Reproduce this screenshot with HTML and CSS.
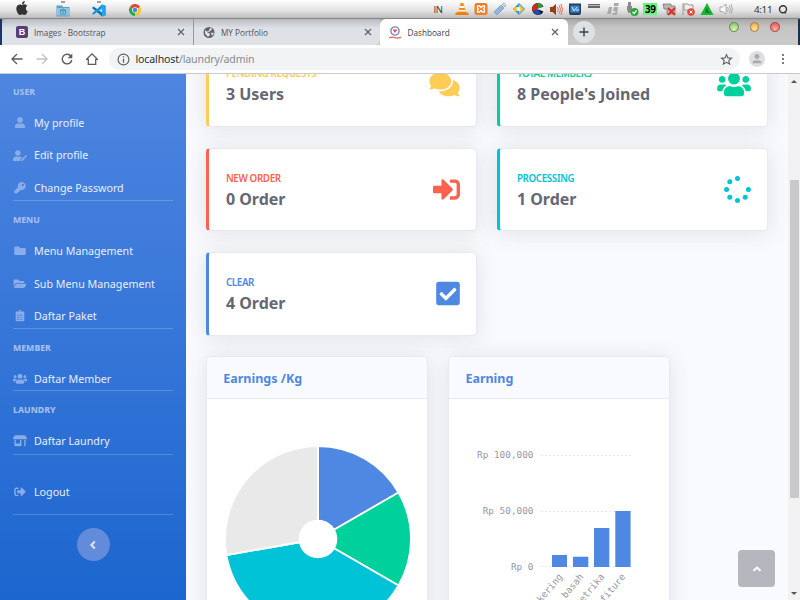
FILE: index.html
```html
<!DOCTYPE html>
<html lang="en">
<head>
<meta charset="utf-8">
<title>Dashboard</title>
<link rel="stylesheet" href="styles.css">
</head>
<body>
<svg class="defs" width="0" height="0">
  <defs>
    <symbol id="user" viewBox="0 0 448 512"><path d="M224 256c70.7 0 128-57.3 128-128S294.700 0 224 0 96 57.300 96 128s57.300 128 128 128zm89.600 32h-16.700c-22.200 10.200-46.900 16-72.900 16s-50.600-5.800-72.900-16h-16.700C60.200 288 0 348.200 0 422.400V464c0 26.500 21.500 48 48 48h352c26.500 0 48-21.500 48-48v-41.600c0-74.200-60.200-134.400-134.400-134.400z"/></symbol>
    <symbol id="user-edit" viewBox="0 0 640 512"><path d="M224 256c70.700 0 128-57.300 128-128S294.700 0 224 0 96 57.300 96 128s57.300 128 128 128zm89.600 32h-16.700c-22.200 10.200-46.900 16-72.900 16s-50.600-5.800-72.900-16h-16.700C60.200 288 0 348.200 0 422.400V464c0 26.500 21.500 48 48 48h274l8-84 92-100c-24-25-62-40-108.400-40zM362 440l-9 70 70-9 150-150-61-61zM592 332l35-35c14-14 14-28 0-42l-20-20c-14-14-28-14-42 0l-35 35z"/></symbol>
    <symbol id="key" viewBox="0 0 512 512"><path d="M512 176C512 273.200 433.200 352 336 352c-11.200 0-22.200-1-32.800-3l-24 27A24 24 0 0 1 261.200 384H224v40c0 13.300-10.700 24-24 24h-40v40c0 13.300-10.700 24-24 24H24c-13.300 0-24-10.700-24-24v-78c0-6.400 2.500-12.500 7-17l161.800-161.800C163.100 213.800 160 195.300 160 176 160 78.800 238.800 0 336 0 433.500 0 512 78.500 512 176zM336 128c0 26.500 21.500 48 48 48s48-21.500 48-48-21.500-48-48-48-48 21.500-48 48z"/></symbol>
    <symbol id="folder" viewBox="0 0 512 512"><path d="M464 128H272l-64-64H48C21.500 64 0 85.500 0 112v288c0 26.500 21.500 48 48 48h416c26.500 0 48-21.500 48-48V176c0-26.500-21.500-48-48-48z"/></symbol>
    <symbol id="folder-open" viewBox="0 0 576 512"><path d="M572.700 292.100L500.300 416.200A64 64 0 0 1 445 448H45c-18.500 0-30-20-20.700-36l72.400-124.200A64 64 0 0 1 152 256h400c18.500 0 30 20 20.700 36.100zM152 224h328v-48c0-26.500-21.500-48-48-48H272l-64-64H48C21.500 64 0 85.500 0 112v278l69-118.400C86.200 242.300 118 224 152 224z"/></symbol>
    <symbol id="clipboard" viewBox="0 0 384 512"><path fill-rule="evenodd" d="M336 64h-80a64 64 0 0 0-128 0H48C21.500 64 0 85.500 0 112v352c0 26.500 21.500 48 48 48h288c26.500 0 48-21.500 48-48V112c0-26.500-21.500-48-48-48zM72 208h48v48H72zm0 96h48v48H72zm0 96h48v40H72zm88-184h144v26H160zm0 96h144v26H160zm0 96h144v26H160zM192 40a24 24 0 1 1 0 48 24 24 0 0 1 0-48z"/></symbol>
    <symbol id="users" viewBox="0 0 640 512"><path d="M96 224c35.300 0 64-28.700 64-64s-28.700-64-64-64-64 28.700-64 64 28.700 64 64 64zm448 0c35.300 0 64-28.700 64-64s-28.700-64-64-64-64 28.700-64 64 28.700 64 64 64zm32 32h-64c-17.600 0-33.500 7.100-45.100 18.600 40.300 22.100 68.900 62 75.100 109.400h66c17.700 0 32-14.300 32-32v-32c0-35.300-28.700-64-64-64zm-256 0c61.900 0 112-50.100 112-112S381.900 32 320 32 208 82.100 208 144s50.100 112 112 112zm76.800 32h-8.300c-20.800 10-43.900 16-68.500 16s-47.600-6-68.500-16h-8.300C179.600 288 128 339.600 128 403.200V432c0 26.500 21.500 48 48 48h288c26.500 0 48-21.500 48-48v-28.800c0-63.600-51.600-115.200-115.200-115.200zm-223.700-13.400C161.500 263.100 145.600 256 128 256H64c-35.300 0-64 28.700-64 64v32c0 17.700 14.300 32 32 32h65.900c6.300-47.400 34.900-87.300 75.200-109.400z"/></symbol>
    <symbol id="store" viewBox="0 0 640 512"><path fill-rule="evenodd" d="M106 0h428c12 0 21 5 27 14l72 113c19 31 1 65-33 65H40c-34 0-52-34-33-65L79 14C85 5 94 0 106 0zM64 224h64v160h192V224h64v240c0 26-22 48-48 48H112c-26 0-48-22-48-48zM512 224h64v264c0 13-11 24-24 24h-16c-13 0-24-11-24-24z"/></symbol>
    <symbol id="sign-out" viewBox="0 0 512 512"><path d="M497 273L329 441c-15 15-41 4.500-41-17v-96H152c-13.300 0-24-10.700-24-24v-96c0-13.300 10.700-24 24-24h136V88c0-21.400 25.900-32 41-17l168 168c9.300 9.400 9.300 24.600 0 34zM192 436v-40c0-6.600-5.400-12-12-12H96c-17.700 0-32-14.300-32-32V160c0-17.700 14.300-32 32-32h84c6.600 0 12-5.400 12-12V76c0-6.600-5.400-12-12-12H96c-53 0-96 43-96 96v192c0 53 43 96 96 96h84c6.600 0 12-5.400 12-12z"/></symbol>
    <symbol id="close" viewBox="0 0 8 8"><path d="M1 1l6 6M7 1L1 7" fill="none" stroke="#5f6368" stroke-width="1.200"/></symbol>
  </defs>
</svg>

<div class="screen">
  <header class="menubar">
    <div class="dock">
      <svg class="apple" viewBox="0 0 24 24"><path d="M12.150 6.900c-.950 0-2.410-1.080-3.960-1.040-2.040.030-3.910 1.180-4.960 3.010-2.120 3.680-.550 9.100 1.520 12.090 1.010 1.450 2.210 3.090 3.790 3.040 1.520-.070 2.090-.990 3.940-.990 1.830 0 2.350.990 3.960.950 1.640-.030 2.680-1.480 3.680-2.950 1.160-1.690 1.640-3.330 1.660-3.420-.040-.010-3.180-1.220-3.220-4.860-.030-3.040 2.480-4.490 2.600-4.560-1.430-2.090-3.620-2.320-4.390-2.380-2-.160-3.680 1.090-4.610 1.090zM15.530 3.830c.840-1.010 1.400-2.430 1.250-3.830-1.210.050-2.660.810-3.530 1.820-.780.900-1.450 2.340-1.270 3.710 1.340.100 2.720-.690 3.560-1.700"/></svg>
      <svg class="finder" viewBox="0 0 14 15"><path d="M5 0h4v1H5z" fill="#444"/><path d="M1 4h5l1 1.500h6.500V15H.500V4z" fill="#5e9fc4"/><path d="M1 6.500h12V14H1z" fill="#8cc3df"/><path d="M4 9l3-1.500L10 9zM4.500 9.500v2.500M7 9.500v2.500M9.500 9.500v2.500M4 12.500h6" fill="none" stroke="#4d88ab" stroke-width=".8"/></svg>
      <svg class="code" viewBox="0 0 14 15"><path d="M5 0h4v1H5z" fill="#444"/><path d="M10 3l3.500 1.300v9.400L10 15 0 6.500 1.500 5l8.500 6z" fill="#0078bd"/><path d="M10 3v12l3.500-1.300V4.300z" fill="#21a5f0"/><path d="M10 3v4L1.500 13.300 0 12z" fill="#1493dc"/></svg>
      <svg class="chrome" viewBox="0 0 12 12"><path d="M6 6L.8 3A6 6 0 0 1 11.200 3z" fill="#e4463a"/><path d="M6 6l5.200-3A6 6 0 0 1 6 12z" fill="#fbc52e"/><path d="M6 6v6A6 6 0 0 1 .8 3z" fill="#2da653"/><circle cx="6" cy="6" r="2.800" fill="#fff"/><circle cx="6" cy="6" r="2.200" fill="#4486ef"/></svg>
    </div>
    <span class="lang">IN</span>
    <div class="tray">
      <svg viewBox="0 0 14 14"><path d="M5.700 1h2.600L11 11H3z" fill="#f58a12"/><path d="M5 4h4l.6 2H4.400zM4 8h6l.4 1.500H3.600z" fill="#fff"/><path d="M1 10.500h12l.8 2.500H.2z" fill="#ee7d0b"/></svg>
      <svg viewBox="0 0 14 14"><rect x=".5" y="1" width="13" height="12" rx="2.500" fill="#f47b20"/><path d="M3.500 4h2L7 5.500 8.500 4h2v2l-1 1 1 1v2h-2L7 8.500 5.500 10h-2V8l1-1-1-1z" stroke="#fff" stroke-width="1.300" fill="none"/></svg>
      <svg viewBox="0 0 14 14"><path d="M1 10l7-7 3 3-7 7z" fill="#8fb6e2" stroke="#6b8bb0" stroke-width=".6"/><path d="M9 2l2-1 2 2-1 2z" fill="#ddd" stroke="#888" stroke-width=".5"/></svg>
      <svg viewBox="0 0 14 14"><path d="M1 7l6-6 6 6-6 6z" fill="#2f9ae0"/><path d="M2 5h5V2l5 5-5 5V9H2z" fill="#f5bf32"/><circle cx="6.500" cy="7" r="2" fill="#e8f1fa"/></svg>
      <svg viewBox="0 0 14 14"><circle cx="7" cy="7" r="6" fill="#101c20"/><path d="M7 1a6 6 0 0 0-5 9l5-3z" fill="#c72b23"/><path d="M7 1a6 6 0 0 1 5 3L7 7z" fill="#2b9c37"/><path d="M2 10a6 6 0 0 0 8 2L7 7z" fill="#1d4cb5"/><path d="M14 4L6 7l8 3z" fill="#ececec"/></svg>
      <svg viewBox="0 0 14 14"><path d="M1 5h2.500L7 2v11L3.500 10H1z" fill="#94400f"/><path d="M8.500 5q1.500 2.500 0 5M10.300 3.500q2.500 4 0 8M12 2q3 5.500 0 11" fill="none" stroke="#ed6a4b"/></svg>
      <svg viewBox="0 0 14 14"><path d="M1 1.500h12v9.500l-1 2H2l-1-2z" fill="#24405d"/><path d="M2.500 3.500h9v7h-9z" fill="#3a85cf"/><path d="M4 5l2 4 3-4M8 8h3" stroke="#d9ecfa" fill="none"/></svg>
      <svg viewBox="0 0 14 14"><path d="M1 2h12v4H1z" fill="#666"/><path d="M1 3h12v1H1z" fill="#bbb"/></svg>
      <svg viewBox="0 0 14 14"><path d="M8 1h5l-1 3H8zM3 5h3l-1 7H1zM8 5h4l-1 8H6l1-2h2l.5-2H7z" fill="#aaa"/></svg>
      <svg viewBox="0 0 14 14"><path d="M3 0h3v4H3zM2 4h5v4l-1.500 3h-2L2 8z" fill="#898989"/><circle cx="9.500" cy="10" r="4" fill="#25a938"/><path d="M7.500 10l1.500 1.500 2.500-3" stroke="#fff" fill="none" stroke-width="1.200"/></svg>
      <span class="badge">39</span>
      <svg viewBox="0 0 14 14"><path d="M1 2h8v2h4v8H5V7H2z" fill="#b6b6b6" stroke="#707070" stroke-width=".7"/><path d="M6 6l7 7M13 6l-7 7" stroke="#e32d21" stroke-width="2"/></svg>
      <svg viewBox="0 0 14 14"><path d="M2 1v12M3 2h4l1 1h4v6H8L7 8H3z" fill="#eee" stroke="#888" stroke-width=".8"/><circle cx="10" cy="10" r="3.800" fill="#e2463b"/><path d="M8.500 8.500l3 3M11.500 8.500l-3 3" stroke="#fff"/></svg>
      <svg viewBox="0 0 14 14"><path d="M7 1l6.500 12H.5z" fill="#16b835"/><path d="M7 5l1 4 3 2-6-.5z" fill="#0a7c1d"/></svg>
      <svg viewBox="0 0 14 14"><path d="M1 5h2.500L7 2v10L3.500 9.500H1z" fill="#fafafa" stroke="#999" stroke-width=".8"/><path d="M8.500 5q1.500 2 0 4.500M10.300 3.500q2.500 4 0 7.500M12 2q3 5 0 10" fill="none" stroke="#999" stroke-width=".8"/></svg>
    </div>
    <span class="clock">4:11</span>
    <svg class="spot" viewBox="0 0 10 10"><circle cx="5" cy="4.700" r="3.500" fill="none" stroke="#333" stroke-width="1.400"/><path d="M6.800 7l1 2" stroke="#333" stroke-width="1.300"/></svg>
  </header>

  <div class="tabs">
    <div class="tab first">
      <span class="bs">B</span><span class="name">Images · Bootstrap</span><svg class="x"><use href="#close"/></svg>
    </div>
    <div class="tab second">
      <svg class="fav" viewBox="0 0 12 12"><circle cx="6" cy="6" r="5.500" fill="#5f6368"/><path d="M2 3.500q2 2.500 4 .500l1-2.500 2 .500q0 2-2.500 3L4 6l3 1q0 2-2 3.500L2 7z" fill="#dee1e6"/><path d="M8 6l3 .500-2 3z" fill="#dee1e6"/></svg>
      <span class="name">MY Portfolio</span><svg class="x"><use href="#close"/></svg>
    </div>
    <div class="tab active">
      <svg class="fav" viewBox="0 0 12 13"><circle cx="6" cy="5" r="4.100" fill="#fff" stroke="#7a83c9" stroke-width="1.400"/><path d="M3.500 3.500h5L6 7z" fill="#e2504a"/><path d="M0 11.700q3-1 6 0t6-.500" fill="none" stroke="#ec6d6d" stroke-width="1.400"/></svg>
      <span class="name">Dashboard</span><svg class="x"><use href="#close"/></svg>
    </div>
    <div class="plus"><svg viewBox="0 0 10 10"><path d="M5 .5v9M.5 5h9" stroke="#3c4043" stroke-width="1.400"/></svg></div>
    <div class="lights"><i class="green"></i><i class="amber"></i><i class="red"></i></div>
  </div>

  <div class="toolbar">
    <svg viewBox="0 0 12 12"><path d="M11.500 6H1.500M6 1L1 6l5 5" fill="none" stroke="#5a5e62" stroke-width="1.300"/></svg>
    <svg viewBox="0 0 12 12"><path d="M.5 6h10M6 1l5 5-5 5" fill="none" stroke="#bfc1c4" stroke-width="1.300"/></svg>
    <svg viewBox="0 0 12 12"><path d="M10 3.200A4.800 4.800 0 1 0 10.800 7" fill="none" stroke="#5a5e62" stroke-width="1.400"/><path d="M11.300.5v4.700H6.600z" fill="#5a5e62"/></svg>
    <svg viewBox="0 0 12 12"><path d="M.6 6.300L6 .9l5.400 5.400H9.700v5H2.300v-5z" fill="none" stroke="#5a5e62" stroke-width="1.300"/></svg>
    <div class="address">
      <svg viewBox="0 0 12 12"><circle cx="6" cy="6" r="5" fill="none" stroke="#5f6368" stroke-width="1.100"/><path d="M6 5.300V9M6 3v1.200" stroke="#5f6368" stroke-width="1.200"/></svg>
      <span class="url">localhost<span>/laundry/admin</span></span>
      <svg class="star" viewBox="0 0 12 12"><path d="M6 1.500l1.300 3 3.300.3-2.500 2.200.8 3.300L6 8.600l-2.900 1.700.8-3.300L1.400 4.800l3.300-.3z" fill="none" stroke="#5a5e62"/></svg>
    </div>
    <svg class="avatar" viewBox="0 0 16 16"><circle cx="8" cy="8" r="8" fill="#dedfe0"/><circle cx="8" cy="5.500" r="2.400" fill="#a8aaac"/><path d="M3.500 11.500q0-2.300 4.500-2.300t4.500 2.300v.8h-9z" fill="#a8aaac"/></svg>
    <svg class="more" viewBox="0 0 4 12"><circle cx="2" cy="2" r="1.100"/><circle cx="2" cy="6" r="1.100"/><circle cx="2" cy="10" r="1.100"/></svg>
  </div>

  <div class="page">
    <nav class="sidebar">
      <section class="group top">
        <h6>USER</h6>
        <a><svg><use href="#user"/></svg><span>My profile</span></a>
        <a><svg><use href="#user-edit"/></svg><span>Edit profile</span></a>
        <a><svg><use href="#key"/></svg><span>Change Password</span></a>
      </section>
      <section class="group">
        <h6>MENU</h6>
        <a><svg><use href="#folder"/></svg><span>Menu Management</span></a>
        <a><svg><use href="#folder-open"/></svg><span>Sub Menu Management</span></a>
        <a><svg><use href="#clipboard"/></svg><span>Daftar Paket</span></a>
      </section>
      <section class="group member">
        <h6>MEMBER</h6>
        <a><svg><use href="#users"/></svg><span>Daftar Member</span></a>
      </section>
      <section class="group laundry">
        <h6>LAUNDRY</h6>
        <a><svg><use href="#store"/></svg><span>Daftar Laundry</span></a>
      </section>
      <section class="group logout">
        <a><svg><use href="#sign-out"/></svg><span>Logout</span></a>
      </section>
      <button class="toggle"><svg viewBox="0 0 8 10"><path d="M5.800 1.500L2.300 5l3.500 3.500" fill="none" stroke="#dde5f6" stroke-width="2"/></svg></button>
    </nav>

    <main class="content">
      <div class="stats">
        <article class="stat yellow"><div><h5>PENDING REQUESTS</h5><p>3 Users</p></div>
          <svg width="31" height="27" viewBox="0 0 576 512"><path d="M416 192c0-88.400-93.100-160-208-160S0 103.600 0 192c0 34.300 14.100 65.900 38 92-13.400 30.200-35.500 54.200-35.800 54.500-2.200 2.300-2.800 5.700-1.500 8.700S4.800 352 8 352c36.600 0 66.900-12.300 88.700-25 32.200 15.700 70.300 25 111.300 25 114.900 0 208-71.600 208-160zm122 220c23.900-26 38-57.700 38-92 0-66.900-53.500-124.200-129.300-148.100.9 6.600 1.300 13.300 1.300 20.100 0 105.900-107.700 192-240 192-10.800 0-21.300-.8-31.700-1.900C207.800 439.600 281.800 480 368 480c41 0 79.100-9.200 111.300-25 21.800 12.700 52.100 25 88.700 25 3.200 0 6.100-1.900 7.300-4.800 1.300-2.900.7-6.300-1.500-8.700-.3-.3-22.400-24.200-35.800-54.500z"/></svg></article>
        <article class="stat green"><div><h5>TOTAL MEMBERS</h5><p>8 People's Joined</p></div><svg width="34" height="27"><use href="#users"/></svg></article>
        <article class="stat red"><div><h5>NEW ORDER</h5><p>0 Order</p></div>
          <svg width="27" height="27" viewBox="0 0 512 512"><path d="M416 448h-84c-6.600 0-12-5.400-12-12v-40c0-6.600 5.400-12 12-12h84c17.700 0 32-14.300 32-32V160c0-17.700-14.300-32-32-32h-84c-6.600 0-12-5.400-12-12V76c0-6.600 5.400-12 12-12h84c53 0 96 43 96 96v192c0 53-43 96-96 96zm-47-209L201 71c-15-15-41-4.500-41 17v96H24c-13.300 0-24 10.700-24 24v96c0 13.300 10.700 24 24 24h136v96c0 21.500 26 32 41 17l168-168c9.300-9.400 9.300-24.600 0-34z"/></svg></article>
        <article class="stat cyan"><div><h5>PROCESSING</h5><p>1 Order</p></div>
          <svg width="27" height="27" viewBox="0 0 27 27"><circle cx="13.500" cy="2.600" r="2.500"/><circle cx="5.800" cy="5.800" r="2.500"/><circle cx="2.600" cy="13.500" r="2.500"/><circle cx="5.800" cy="21.200" r="2.500"/><circle cx="13.500" cy="24.400" r="2.500"/><circle cx="21.200" cy="21.200" r="2.500"/><circle cx="24.400" cy="13.500" r="2.500"/></svg></article>
        <article class="stat blue"><div><h5>CLEAR</h5><p>4 Order</p></div>
          <svg width="24" height="27" viewBox="0 0 448 512"><path d="M400 480H48c-26.500 0-48-21.500-48-48V80c0-26.500 21.500-48 48-48h352c26.500 0 48 21.500 48 48v352c0 26.500-21.500 48-48 48zm-204.700-98l184-184c6.300-6.300 6.300-16.400 0-22.700l-22.600-22.600c-6.300-6.300-16.400-6.300-22.700 0L184 302.700l-70-70c-6.300-6.300-16.400-6.300-22.700 0l-22.600 22.600c-6.300 6.300-6.300 16.400 0 22.700l104 104c6.200 6.200 16.400 6.200 22.600 0z"/></svg></article>
      </div>
      <div class="charts">
        <article class="chart">
          <h4>Earnings /Kg</h4>
          <svg width="220" height="280" viewBox="207 399 220 280">
            <g stroke="#fff" stroke-width="1.800" stroke-linejoin="round">
              <path d="M318 539V446A93 93 0 0 1 398.500 492.500z" fill="#4e88e3"/>
              <path d="M318 539L398.500 492.500A93 93 0 0 1 398.500 585.500z" fill="#00d09b"/>
              <path d="M318 539L398.500 585.500A93 93 0 0 1 226.400 555.100z" fill="#00c3d7"/>
              <path d="M318 539L226.400 555.100A93 93 0 0 1 318 446z" fill="#e9e9e9"/>
            </g>
            <circle cx="318" cy="539" r="19.300" fill="#fff"/>
          </svg>
        </article>
        <article class="chart">
          <h4>Earning</h4>
          <svg class="bars" width="220" height="280" viewBox="450 399 220 280">
            <path d="M542 455.500h91M542 511.500h91M542 566.500h91" stroke="#e6e7ec" stroke-dasharray="2 2"/>
            <g text-anchor="end"><text x="534.500" y="458">Rp 100,000</text><text x="534.500" y="514">Rp 50,000</text><text x="534.500" y="570">Rp 0</text></g>
            <g fill="#4e88e3"><path d="M553 555h15v12h-15zM574 556.700h15.300V567H574zM595 528h15.300v39H595zM616.300 511h15.300v56h-15.300z"/></g>
            <g text-anchor="end"><text transform="translate(564 577) rotate(-50)">Cuci kering</text><text transform="translate(585 577) rotate(-50)">Cuci basah</text><text transform="translate(606 577) rotate(-50)">Setrika</text><text transform="translate(627 577) rotate(-50)">Furnifiture</text></g>
          </svg>
        </article>
      </div>
    </main>
    <div class="scrollbar"><i class="up"></i><i class="thumb"></i><i class="down"></i></div>
    <button class="to-top"><svg viewBox="0 0 10 8"><path d="M1.500 5.800L5 2.500l3.500 3.300" fill="none" stroke="#fff" stroke-width="2"/></svg></button>
  </div>
</div>
</body>
</html>
```

FILE: styles.css
```css
* { box-sizing: border-box; }
body { margin: 0; font-family: "Noto Sans", "Open Sans", sans-serif; }
h4, h5, h6, p { margin: 0; }
button { border: 0; padding: 0; }
.defs { position: absolute; }
.screen { width: 800px; height: 600px; overflow: hidden; display: flex; flex-direction: column; }

.menubar { height: 19px; flex: none; display: flex; align-items: center; background: linear-gradient(#fff, #e2e2e2 60%, #bcbcbc); border-bottom: 1px solid #858585; color: #333; }
.dock { display: flex; align-items: center; width: 433.5px; flex: none; padding-left: 14.5px; }
.apple { width: 14px; height: 14px; fill: #333; margin-top: -2px; }
.finder { width: 14px; height: 16px; margin-left: 27.5px; }
.code { width: 14px; height: 16px; margin-left: 22px; }
.chrome { width: 12px; height: 12px; margin-left: 23px; margin-top: 1px; }
.lang { width: 19.5px; flex: none; font: 9.5px "Open Sans", sans-serif; letter-spacing: -.4px; }
.tray { display: grid; grid-template-columns: repeat(15, 18.8px); justify-items: center; align-items: center; }
.tray svg { width: 14px; height: 14px; display: block; }
.badge { width: 14px; height: 12px; background: #64f57c; color: #000; font: bold 10px/12px "Noto Sans", sans-serif; text-align: center; letter-spacing: -.4px; }
.clock { font-size: 9.8px; width: 23px; margin-left: 19px; white-space: nowrap; letter-spacing: -.3px; }
.spot { width: 10px; height: 11px; flex: none; margin-left: 1px; }

.tabs { height: 26px; flex: none; display: flex; align-items: stretch; background: linear-gradient(#a7a7a7, #c4c4c4 30%, #cbcbcb); border-left: 2px solid #15356d; border-right: 2px solid #183250; color: #50545a; }
.tab { display: flex; align-items: center; background: linear-gradient(#b9bbc0, #dee1e6 35%); }
.tab .name { flex: 1; white-space: nowrap; font-family: "Open Sans", sans-serif; font-size: 8.2px; }
.x { width: 8px; height: 8px; }
.fav { width: 12px; height: 13px; }
.first { width: 192px; padding-left: 14px; padding-right: 8px; border-right: 1px solid #96999d; border-top-left-radius: 6px; }
.bs { width: 12px; height: 12px; border-radius: 2px; background: #573d7c; color: #fff; font: bold 9px/12px "Liberation Sans", sans-serif; text-align: center; margin-right: 6px; }
.second { width: 186px; padding-left: 9px; padding-right: 8px; border-bottom-right-radius: 6px; }
.second .name { margin-left: 6px; }
.tab.active { width: 188px; background: #fff; padding: 0 9px; border-radius: 6px 6px 0 0; color: #3c4043; }
.active .name { margin-left: 6.5px; }
.plus { width: 22px; height: 22px; border-radius: 50%; background: #dee1e6; display: grid; place-items: center; margin: 2px 0 0 5px; }
.plus svg { width: 10px; height: 10px; }
.lights { display: flex; gap: 11px; margin: 3px 0 0 134px; }
.lights i { width: 9.5px; height: 9.5px; border-radius: 50%; border: 1px solid; }
.lights .green { background: radial-gradient(circle at 50% 75%, #dcf4bd, #79b956); border-color: #5f8d49; }
.lights .amber { background: radial-gradient(circle at 50% 75%, #ffe8a4, #e6a03c); border-color: #b58038; }
.lights .red { background: radial-gradient(circle at 50% 75%, #ffb5a6, #dc4545); border-color: #ad4141; }

.toolbar { height: 29px; flex: none; display: flex; align-items: center; gap: 13px; padding-left: 11px; background: #fff; border-bottom: 1px solid #c9cacc; }
.toolbar > svg { width: 12px; height: 12px; flex: none; }
.address { width: 631px; height: 22px; flex: none; margin-left: -2px; border-radius: 11px; background: #f1f3f4; display: flex; align-items: center; padding: 0 7px 0 8px; }
.address svg { width: 13px; height: 13px; }
.url { flex: 1; margin-left: 5.5px; font-size: 10.6px; line-height: 22px; color: #2c2f33; letter-spacing: -.15px; }
.url span { color: #858a8f; }
.toolbar .avatar { width: 16px; height: 16px; margin-left: -4px; }
.toolbar .more { width: 4px; margin-left: 3px; fill: #5a5e62; }

.page { flex: 1; min-height: 0; display: flex; position: relative; background: #f9fafd; overflow: hidden; }
.sidebar { width: 186px; flex: none; background: linear-gradient(#4e85e0, #1c66cf); padding: 0 13px; color: #e8eefb; }
.group { border-bottom: 1px solid rgba(255,255,255,.2); height: 128.2px; }
.group.top { height: 127px; }
.group h6 { height: 33.5px; padding-top: 5px; font-size: 8.7px; line-height: 29px; font-weight: 800; color: #a5bdec; }
.group.top h6 { height: 32.3px; padding-top: 4px; }
.group a { display: flex; align-items: center; height: 32.7px; font-size: 10.7px; white-space: nowrap; }
.group a svg { width: 14px; height: 11.5px; fill: #8aadea; margin-right: 7px; flex: none; }
.group.member { height: 62px; }
.member h6, .laundry h6 { height: 33.4px; }
.group.laundry { height: 64px; }
.group.logout { height: 60px; padding-top: 20.5px; }
.toggle { display: grid; place-items: center; width: 33px; height: 33px; border-radius: 50%; background: #628cdb; margin: 13px auto 0; }
.toggle svg { width: 8px; height: 10px; }

.content { flex: 1; margin-top: -30.5px; padding-left: 20.3px; }
.stats { display: grid; grid-template-columns: 271px 271px; grid-auto-rows: 83.3px; gap: 21.2px 20px; }
.stat, .chart { background: #fff; border: 1px solid #e6e9f2; border-radius: 4px; box-shadow: 0 2px 22px rgba(58,59,69,.13); }
.stat { display: flex; align-items: center; justify-content: space-between; border-left: 3.5px solid; padding: 0 16px; }
.stat svg { fill: currentColor; margin-top: -1px; }
.stat h5 { font-size: 9.8px; line-height: 13px; white-space: nowrap; font-weight: 600; letter-spacing: -.36px; }
.stat p { color: #646873; font-size: 16px; line-height: 20px; font-weight: 700; margin-top: 4px; white-space: nowrap; }
.stat > div { padding: 1px 0 0 .6px; }
.yellow { color: #ffcd56; border-left-color: #ffcd56; }
.stat.green { color: #00d09b; border-left-color: #00d09b; }
.stat.red { color: #fc624d; border-left-color: #fc624d; }
.cyan { color: #00c3d7; border-left-color: #00c3d7; }
.blue { color: #4e88e3; border-left-color: #4e88e3; }
.charts { display: flex; gap: 20px; margin-top: 20px; }
.chart { width: 222.1px; height: 330px; }
.chart h4 { height: 42.2px; padding-left: 16px; border-bottom: 1px solid #e6e9f2; background: #f9fafd; border-radius: 4px 4px 0 0; color: #4e88e3; font-size: 12.5px; line-height: 43px; }
.chart svg { display: block; }
.bars text { font: 9.4px "DejaVu Sans Mono", monospace; fill: #9698a3; }

.scrollbar { width: 12px; background: #f2f2f3; display: flex; flex-direction: column; align-items: center; }
.scrollbar .up, .scrollbar .down { width: 0; border: 3px solid transparent; }
.scrollbar .up { border-top-width: 0; border-bottom-color: #555; margin-top: 6px; }
.thumb { width: 9px; height: 318px; background: #c9c9c9; margin-top: 97px; }
.scrollbar .down { border-bottom-width: 0; border-top-color: #555; margin-top: 94px; }
.to-top { position: absolute; right: 25px; bottom: 13px; width: 37px; height: 37px; border-radius: 4px; background: #b6b7be; display: grid; place-items: center; }
.to-top svg { width: 10px; height: 8px; }
```
